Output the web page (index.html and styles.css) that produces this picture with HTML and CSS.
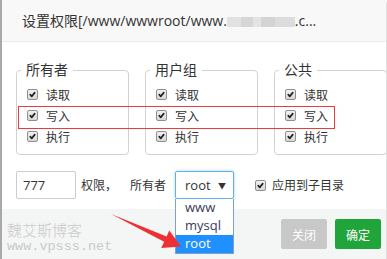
FILE: index.html
```html
<!DOCTYPE html>
<html lang="zh-CN">
<head>
  <meta charset="UTF-8" />
  <meta name="viewport" content="width=device-width, initial-scale=1.0" />
  <title>设置权限</title>
  <link rel="stylesheet" href="styles.css">
</head>
<body>
  <div class="dialog">
    <div class="dialog-title">
      <span>设置权限[/www/wwwroot/www.</span><span class="blur"></span><span>.c...</span>
    </div>

    <div class="dialog-body">
      <div class="groups">
        <fieldset class="group">
          <legend>所有者</legend>
          <label class="row"><span class="cb"><svg viewBox="0 0 12 12"><path d="M3 6.2l2 2.3 4-5"/></svg></span>读取</label>
          <label class="row"><span class="cb"><svg viewBox="0 0 12 12"><path d="M3 6.2l2 2.3 4-5"/></svg></span>写入</label>
          <label class="row"><span class="cb"><svg viewBox="0 0 12 12"><path d="M3 6.2l2 2.3 4-5"/></svg></span>执行</label>
        </fieldset>
        <fieldset class="group">
          <legend>用户组</legend>
          <label class="row"><span class="cb"><svg viewBox="0 0 12 12"><path d="M3 6.2l2 2.3 4-5"/></svg></span>读取</label>
          <label class="row"><span class="cb"><svg viewBox="0 0 12 12"><path d="M3 6.2l2 2.3 4-5"/></svg></span>写入</label>
          <label class="row"><span class="cb"><svg viewBox="0 0 12 12"><path d="M3 6.2l2 2.3 4-5"/></svg></span>执行</label>
        </fieldset>
        <fieldset class="group">
          <legend>公共</legend>
          <label class="row"><span class="cb"><svg viewBox="0 0 12 12"><path d="M3 6.2l2 2.3 4-5"/></svg></span>读取</label>
          <label class="row"><span class="cb"><svg viewBox="0 0 12 12"><path d="M3 6.2l2 2.3 4-5"/></svg></span>写入</label>
          <label class="row"><span class="cb"><svg viewBox="0 0 12 12"><path d="M3 6.2l2 2.3 4-5"/></svg></span>执行</label>
        </fieldset>
      </div>

      <div class="perm-row">
        <input class="num" type="text" value="777" />
        <span class="txt-perm">权限，</span>
        <span class="txt-owner">所有者</span>
        <div class="select-wrap">
          <div class="select">
            <span>root</span>
            <span class="caret">▼</span>
          </div>
          <ul class="options">
            <li>www</li>
            <li>mysql</li>
            <li class="active">root</li>
          </ul>
        </div>
        <label class="sub">
          <span class="cb"><svg viewBox="0 0 12 12"><path d="M3 6.2l2 2.3 4-5"/></svg></span>应用到子目录
        </label>
      </div>
    </div>

    <div class="dialog-footer">
      <button class="btn btn-close">关闭</button>
      <button class="btn btn-ok">确定</button>
    </div>

    <div class="watermark">
      <div class="wm-name">魏艾斯博客</div>
      <div class="wm-url">www.vpsss.net</div>
    </div>

    <!-- annotations -->
    <div class="mark-box"></div>
    <svg class="mark-arrow" width="387" height="259" viewBox="0 0 387 259">
      <polygon points="111,214 166.6,236.6 169.3,230.6 181,246.5 161.2,248 164.2,241.8" fill="#ee3035"/>
    </svg>
  </div>
</body>
</html>
```

FILE: styles.css
```css
* {
  box-sizing: border-box;
}
body, html {
  margin: 0;
  padding: 0;
  width: 387px;
  height: 259px;
  overflow: hidden;
  background: #fff;
  font-family: "Open Sans", "Noto Sans CJK SC", sans-serif;
  color: #333;
}
.dialog {
  position: relative;
  width: 387px;
  height: 259px;
  border-left: 2px solid #a9a9a9;
  border-right: 1px solid #e0e0e0;
  border-top-right-radius: 4px;
  overflow: hidden;
}
.dialog-title {
  height: 42px;
  line-height: 41px;
  padding-left: 20px;
  font-size: 14px;
  background-color: #f8f8f8;
  border-bottom: 1px solid #eaeaea;
  white-space: nowrap;
}
.blur {
  display: inline-block;
  width: 68px;
  height: 10px;
  vertical-align: -1px;
  background: linear-gradient(90deg, #e2e2e2 0 14px, #d6d6d6 14px 26px, #e4e4e4 26px 34px, #d4d4d4 34px 48px, #dcdcdc 48px 68px);
}
.dialog-body {
  padding: 18px 0 0 14px;
}
.groups {
  display: flex;
  gap: 16px;
}
.group {
  flex: 0 0 113px;
  width: 113px;
  min-width: 0;
  margin: 0;
  padding: 4px 10px 7px 10px;
  border: 1px solid #d2d2d2;
  border-radius: 4px;
}
.group legend {
  margin-left: -6px;
  padding: 0 5px;
  font-size: 14px;
  line-height: 20px;
}
.row {
  display: flex;
  align-items: center;
  gap: 8px;
  height: 21px;
  font-size: 12px;
}
.cb {
  display: inline-block;
  width: 11px;
  height: 11px;
  border: 1px solid #8f8f8f;
  border-radius: 2px;
  background: linear-gradient(#f0f0f0, #d8d8d8);
  flex: 0 0 auto;
}
.cb svg {
  display: block;
  width: 9px;
  height: 9px;
  fill: none;
  stroke: #222;
  stroke-width: 2.2;
  stroke-linecap: round;
  stroke-linejoin: round;
}
.perm-row {
  display: flex;
  align-items: center;
  height: 28px;
  margin-top: 16px;
  font-size: 12px;
}
.num {
  width: 60px;
  height: 28px;
  padding: 0 0 0 6px;
  border: 1px solid #ccc;
  border-radius: 2px;
  font-family: "Open Sans", sans-serif;
  font-size: 13px;
  color: #333;
}
.txt-perm {
  margin-left: 5px;
}
.txt-owner {
  margin-left: 13px;
}
.select-wrap {
  position: relative;
  margin-left: 9px;
}
.select {
  display: flex;
  align-items: center;
  justify-content: space-between;
  width: 59px;
  height: 28px;
  padding: 0 7px 0 9px;
  border: 1px solid #66afe9;
  border-radius: 2px;
  box-shadow: 0 0 3px rgba(102, 175, 233, 0.6);
  font-size: 13px;
}
.caret {
  font-size: 8px;
}
.options {
  position: absolute;
  top: 28px;
  left: 0;
  width: 59px;
  margin: 0;
  padding: 0;
  list-style: none;
  background: #fff;
  border: 1px solid #7f9ed3;
  border-top: none;
  font-size: 13px;
  z-index: 2;
}
.options li {
  height: 18px;
  line-height: 17px;
  padding-left: 9px;
  color: #3a3a5a;
}
.options li.active {
  background-color: #1e90ff;
  color: #fff;
}
.sub {
  display: flex;
  align-items: center;
  gap: 6px;
  margin-left: 21px;
}
.dialog-footer {
  display: flex;
  align-items: center;
  justify-content: flex-end;
  gap: 8px;
  height: 50px;
  margin-top: 10px;
  padding-right: 5px;
  background-color: #f4f5f5;
}
.btn {
  width: 46px;
  height: 30px;
  border: none;
  border-radius: 2px;
  color: #fff;
  font-family: "Noto Sans CJK SC", sans-serif;
  font-size: 12px;
}
.btn-close {
  background-color: #c8c8c8;
}
.btn-ok {
  background-color: #20a53a;
}
.watermark {
  position: absolute;
  left: 5px;
  top: 221px;
  color: #cacaca;
  pointer-events: none;
}
.wm-name {
  font-family: "Noto Sans CJK SC", sans-serif;
  font-weight: 300;
  font-size: 15px;
  line-height: 18px;
}
.wm-url {
  font-family: "Liberation Mono", monospace;
  font-size: 13.5px;
  line-height: 16px;
}
.mark-box {
  position: absolute;
  left: 16px;
  top: 106px;
  width: 317px;
  height: 23px;
  border: 1.5px solid #ee3a3f;
  pointer-events: none;
}
.mark-arrow {
  position: absolute;
  left: -2px;
  top: 0;
  pointer-events: none;
  z-index: 3;
}
```
